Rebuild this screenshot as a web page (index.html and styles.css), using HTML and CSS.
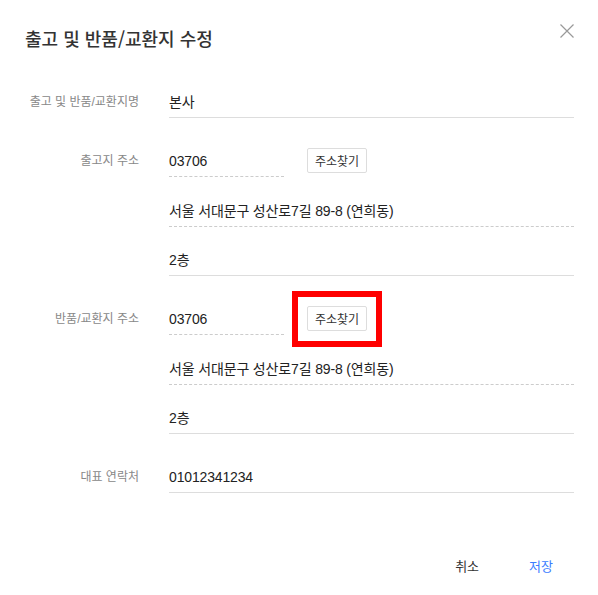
FILE: index.html
```html
<!DOCTYPE html>
<html lang="ko">
<head>
<meta charset="utf-8">
<title>출고 및 반품/교환지 수정</title>
<link rel="stylesheet" href="styles.css">
</head>
<body>
<div class="modal">
  <header class="modal-header">
    <h1 class="modal-title">출고 및 반품/교환지 수정</h1>
    <button class="close-btn" aria-label="닫기">
      <svg width="14" height="14" viewBox="0 0 14 14"><path d="M0.5 0.5 L13.5 13.5 M13.5 0.5 L0.5 13.5" stroke="#999" stroke-width="1.2" fill="none"/></svg>
    </button>
  </header>

  <div class="form">
    <div class="group">
      <div class="label">출고 및 반품/교환지명</div>
      <div class="fields">
        <div class="field">본사</div>
      </div>
    </div>

    <div class="group">
      <div class="label">출고지 주소</div>
      <div class="fields">
        <div class="zip-row">
          <div class="field dashed zip">03706</div>
          <div class="btn-wrap"><button class="find-btn">주소찾기</button></div>
        </div>
        <div class="field dashed">서울 서대문구 성산로7길 89-8 (연희동)</div>
        <div class="field">2층</div>
      </div>
    </div>

    <div class="group">
      <div class="label">반품/교환지 주소</div>
      <div class="fields">
        <div class="zip-row">
          <div class="field dashed zip">03706</div>
          <div class="btn-wrap"><button class="find-btn">주소찾기</button><span class="highlight"></span></div>
        </div>
        <div class="field dashed">서울 서대문구 성산로7길 89-8 (연희동)</div>
        <div class="field">2층</div>
      </div>
    </div>

    <div class="group">
      <div class="label">대표 연락처</div>
      <div class="fields">
        <div class="field">01012341234</div>
      </div>
    </div>
  </div>

  <footer class="modal-footer">
    <button class="foot-btn cancel">취소</button>
    <button class="foot-btn save">저장</button>
  </footer>
</div>
</body>
</html>
```

FILE: styles.css
```css
* { box-sizing: border-box; }
html, body { margin: 0; padding: 0; background: #fff; }
body {
  font-family: "Liberation Sans", "Noto Sans CJK KR", sans-serif;
  color: #222;
}
.modal {
  width: 598px;
  height: 595px;
  padding: 24px 24px 0 25px;
  display: flex;
  flex-direction: column;
}
.modal-header {
  display: flex;
  justify-content: space-between;
  align-items: flex-start;
}
.modal-title {
  margin: 0;
  font-size: 18px;
  line-height: 28px;
  font-weight: 500;
  color: #333;
  font-family: "Noto Sans CJK KR", sans-serif;
}
.close-btn {
  border: 0;
  background: none;
  padding: 0;
  width: 14px;
  height: 14px;
  cursor: pointer;
  display: block;
}
.close-btn svg { display: block; }
.form {
  margin-top: 33px;
  display: flex;
  flex-direction: column;
  gap: 26px;
}
.group {
  display: grid;
  grid-template-columns: 114px 1fr;
  column-gap: 30px;
}
.label {
  text-align: right;
  font-size: 12px;
  color: #888;
  line-height: 20px;
  padding-top: 7px;
  white-space: nowrap;
}
.fields {
  display: flex;
  flex-direction: column;
  gap: 16.5px;
}
.field {
  font-size: 14px;
  line-height: 20px;
  padding: 7px 0 5px;
  border-bottom: 1px solid #ddd;
  color: #222;
  height: 33px;
  letter-spacing: -0.15px;
}
.field.dashed { border-bottom: 1px dashed #ccc; }
.zip-row {
  display: flex;
  align-items: flex-start;
}
.field.zip { width: 115px; }
.btn-wrap {
  position: relative;
  margin-left: 23px;
  margin-top: 4px;
}
.find-btn {
  display: block;
  width: 60px;
  height: 25px;
  border: 1px solid #ddd;
  border-radius: 2px;
  background: #fff;
  font-family: "Noto Sans CJK KR", sans-serif;
  font-size: 12px;
  color: #333;
  padding: 0;
}
.highlight {
  position: absolute;
  left: -15px;
  top: -15px;
  width: 90px;
  height: 56px;
  border: 6px solid #ff0000;
  pointer-events: none;
}
.modal-footer {
  margin-top: auto;
  margin-bottom: 12px;
  display: flex;
  justify-content: flex-end;
}
.foot-btn {
  border: 0;
  background: none;
  font-family: "Noto Sans CJK KR", sans-serif;
  font-size: 13px;
  height: 36px;
  padding: 0 22px;
  cursor: pointer;
}
.foot-btn.cancel { color: #333; padding-right: 25px; }
.foot-btn.save { color: #3b7cff; padding-left: 25px; padding-right: 21px; }
```
